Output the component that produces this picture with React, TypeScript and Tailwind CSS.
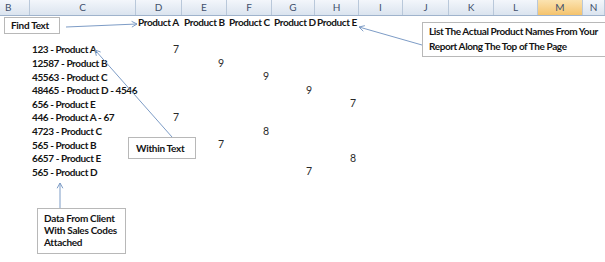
import React from "react";

const cols = [
  { key: "B", w: 30 },
  { key: "C", w: 106 },
  { key: "D", w: 46 },
  { key: "E", w: 45 },
  { key: "F", w: 45 },
  { key: "G", w: 43 },
  { key: "H", w: 44 },
  { key: "I", w: 44 },
  { key: "J", w: 46 },
  { key: "K", w: 45 },
  { key: "L", w: 44 },
  { key: "M", w: 45 },
  { key: "N", w: 22 },
];

const products = ["Product A", "Product B", "Product C", "Product D", "Product E"];

const rows: { label: string; col: string; value: number }[] = [
  { label: "123 - Product A", col: "D", value: 7 },
  { label: "12587 - Product B", col: "E", value: 9 },
  { label: "45563 - Product C", col: "F", value: 9 },
  { label: "48465 - Product D - 4546", col: "G", value: 9 },
  { label: "656 - Product E", col: "H", value: 7 },
  { label: "446 - Product A - 67", col: "D", value: 7 },
  { label: "4723 - Product C", col: "F", value: 8 },
  { label: "565 - Product B", col: "E", value: 7 },
  { label: "6657 - Product E", col: "H", value: 8 },
  { label: "565 - Product D", col: "G", value: 7 },
];

const Arrow = ({ x1, y1, x2, y2 }: { x1: number; y1: number; x2: number; y2: number }) => {
  const a = Math.atan2(y1 - y2, x1 - x2);
  const len = 6;
  const p1 = [x2 + len * Math.cos(a + 0.5), y2 + len * Math.sin(a + 0.5)];
  const p2 = [x2 + len * Math.cos(a - 0.5), y2 + len * Math.sin(a - 0.5)];
  return (
    <g stroke="#7d9cc6" strokeWidth={1} fill="none">
      <line x1={x1} y1={y1} x2={x2} y2={y2} />
      <polyline points={`${p1[0]},${p1[1]} ${x2},${y2} ${p2[0]},${p2[1]}`} />
    </g>
  );
};

const SheetRow = ({ children }: { children: React.ReactNode }) => (
  <div className="flex h-[13.6px] items-center">{children}</div>
);

export default function App() {
  return (
    <div className="relative w-[605px] h-[262px] overflow-hidden bg-white font-['Lato','Liberation_Sans',sans-serif] text-[#141414]">
      {/* column headers */}
      <div className="flex h-[16px] border-b border-[#9fb3cc]">
        {cols.map((c) => (
          <div
            key={c.key}
            style={{ width: c.w }}
            className={`shrink-0 flex items-center text-[10px] text-[#3f4f6b] border-r border-[#b9c8da] ${
              c.key === "B" ? "pl-[5px]" : "justify-center"
            } ${
              c.key === "M"
                ? "bg-gradient-to-b from-[#fbe3b0] to-[#f4c36c]"
                : "bg-gradient-to-b from-[#f3f6fb] to-[#dbe4ef]"
            }`}
          >
            {c.key}
          </div>
        ))}
      </div>

      {/* row 1: product names */}
      <SheetRow>
        <div className="w-[136px] shrink-0" />
        {products.map((p, i) => (
          <div
            key={p}
            style={{ width: cols[i + 2].w }}
            className="shrink-0 pl-[2px] text-[10px] font-bold tracking-[-0.4px] whitespace-nowrap"
          >
            {p}
          </div>
        ))}
      </SheetRow>
      <SheetRow>
        <div />
      </SheetRow>

      {rows.map((r) => (
        <SheetRow key={r.label + r.col}>
          <div className="w-[30px] shrink-0" />
          <div className="w-[106px] shrink-0 pl-[2px] text-[10px] font-bold tracking-[-0.4px] whitespace-nowrap">
            {r.label}
          </div>
          {cols.slice(2, 7).map((c) => (
            <div
              key={c.key}
              style={{ width: c.w }}
              className="shrink-0 pr-[3px] text-right text-[10.5px] text-[#2a2a2a]"
            >
              {c.key === r.col ? r.value : ""}
            </div>
          ))}
        </SheetRow>
      ))}

      {/* drawing layer */}
      <svg className="absolute left-0 top-0" width={605} height={262}>
        <Arrow x1={66} y1={27} x2={137} y2={24} />
        <Arrow x1={172} y1={137} x2={95} y2={50} />
        <Arrow x1={422} y1={45} x2={359} y2={27} />
        <Arrow x1={60} y1={208} x2={60} y2={183} />
      </svg>

      <div className="absolute left-[4px] top-[17px] w-[56px] h-[17px] border border-[#b8b8b8] bg-white pl-[6px] text-[10px] font-bold tracking-[-0.3px] leading-[15px]">
        Find Text
      </div>

      <div className="absolute left-[128px] top-[137px] w-[68px] h-[22px] border border-[#b8b8b8] bg-white pl-[7px] text-[10px] font-bold tracking-[-0.3px] leading-[20px]">
        Within Text
      </div>

      <div className="absolute left-[422px] top-[22px] w-[200px] h-[35px] border border-[#b8b8b8] bg-white pl-[6px] pt-[1px] text-[10px] font-bold tracking-[-0.4px] leading-[15px] whitespace-nowrap">
        <div>List The Actual Product Names From Your</div>
        <div>Report Along The Top of The Page</div>
      </div>

      <div className="absolute left-[37px] top-[208px] w-[89px] h-[46px] border border-[#b8b8b8] bg-white pl-[6px] pt-[3px] text-[10px] font-bold tracking-[-0.3px] leading-[12px]">
        <div>Data From Client</div>
        <div>With Sales Codes</div>
        <div>Attached</div>
      </div>
    </div>
  );
}
